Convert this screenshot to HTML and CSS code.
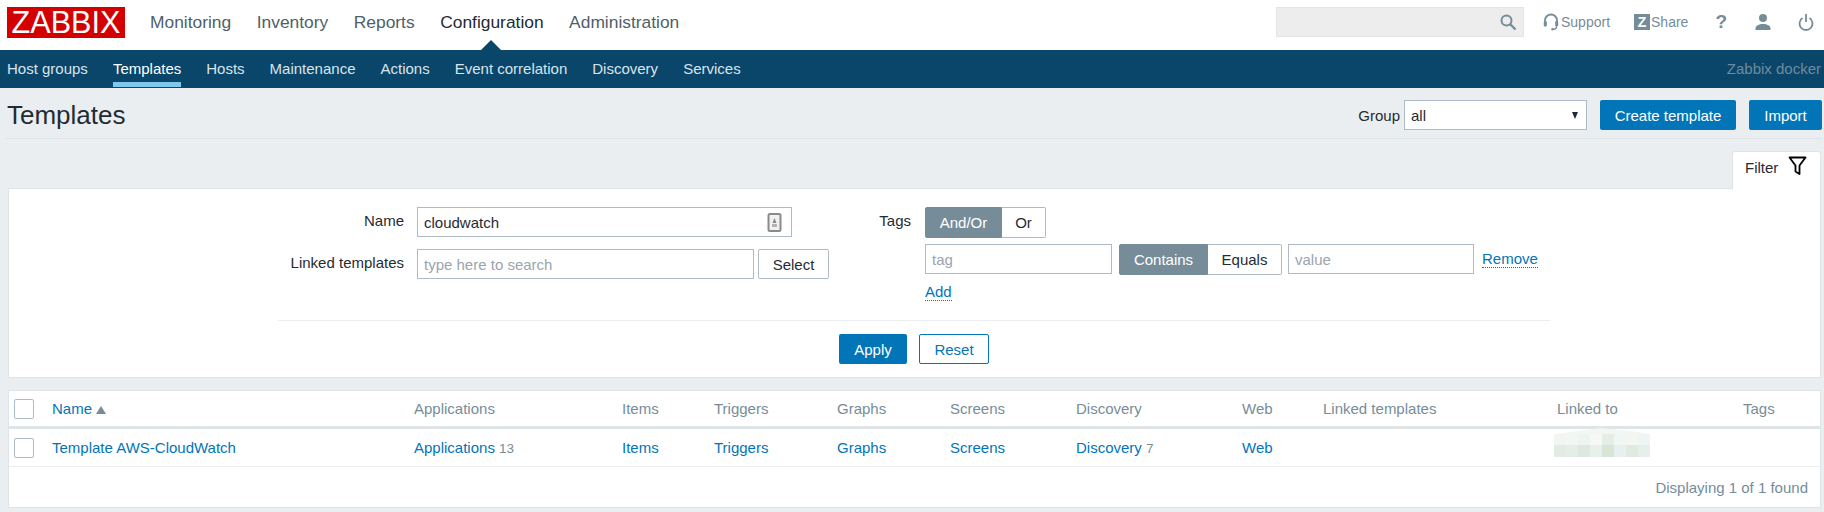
FILE: index.html
```html
<!DOCTYPE html>
<html lang="en">
<head>
    <meta charset="UTF-8">
    <title>Configuration of templates</title>
    <link rel="stylesheet" href="styles.css">
</head>
<body>
    <!-- Top menu -->
    <header class="top-nav">
        <div class="logo">ZABBIX</div>
        <nav class="main-menu">
            <a>Monitoring</a>
            <a>Inventory</a>
            <a>Reports</a>
            <a class="selected">Configuration</a>
            <a>Administration</a>
        </nav>
        <div class="top-tools">
            <div class="search">
                <svg width="18" height="18" viewBox="0 0 18 18"><circle cx="7.5" cy="7.5" r="5" fill="none" stroke="#768d99" stroke-width="2"/><path d="M11 11l5.5 5.5" stroke="#768d99" stroke-width="2.4"/></svg>
            </div>
            <a class="tool tool-support">
                <svg width="16" height="18" viewBox="0 0 16 18"><path d="M2 10V7.5a6 6 0 0 1 12 0V10" fill="none" stroke="#768d99" stroke-width="1.8"/><rect x="0.8" y="8" width="3" height="5.5" rx="1.2" fill="#768d99"/><rect x="12.2" y="8" width="3" height="5.5" rx="1.2" fill="#768d99"/><path d="M13.5 13.5c0 2-1.5 2.8-3.5 2.8" fill="none" stroke="#768d99" stroke-width="1.4"/><circle cx="9.5" cy="16.2" r="1.2" fill="#768d99"/></svg>
                Support
            </a>
            <a class="tool tool-share"><span class="z-box">Z</span>Share</a>
            <a class="tool tool-help">?</a>
            <a class="tool tool-user">
                <svg width="16" height="18" viewBox="0 0 16 18"><circle cx="8" cy="5" r="4" fill="#768d99"/><path d="M0.5 17v-1.500c0-3 3.500-4.500 7.500-4.500s7.500 1.500 7.500 4.500V17z" fill="#768d99"/></svg>
            </a>
            <a class="tool tool-power">
                <svg width="16" height="18" viewBox="0 0 16 18"><path d="M4.500 5a6.500 6.500 0 1 0 7 0" fill="none" stroke="#768d99" stroke-width="1.800"/><path d="M8 1v8" stroke="#768d99" stroke-width="1.800"/></svg>
            </a>
        </div>
    </header>

    <!-- Sub menu -->
    <nav class="sub-nav">
        <a>Host groups</a>
        <a class="selected">Templates</a>
        <a>Hosts</a>
        <a>Maintenance</a>
        <a>Actions</a>
        <a>Event correlation</a>
        <a>Discovery</a>
        <a>Services</a>
        <span class="server-name">Zabbix docker</span>
    </nav>

    <main class="page">
        <div class="title-row">
            <h1>Templates</h1>
            <div class="title-controls">
                <label class="group-label">Group</label>
                <div class="select-wrap">
                    <select class="select"><option>all</option></select>
                </div>
                <button class="btn btn-create">Create template</button>
                <button class="btn btn-import">Import</button>
            </div>
        </div>

        <div class="filter-tabs">
            <div class="filter-tab">
                Filter
                <svg width="19" height="20" viewBox="0 0 19 20"><path d="M1.500 1.500h16l-6 8v8.500l-4-2.500v-6z" fill="none" stroke="#000" stroke-width="1.800" stroke-linejoin="round"/></svg>
            </div>
        </div>

        <!-- Filter -->
        <section class="filter">
            <div class="filter-form">
                <div class="filter-col-left">
                    <label>Name</label>
                    <div class="input-row">
                        <input class="input input-name" value="cloudwatch">
                        <svg class="input-icon" width="15" height="19" viewBox="0 0 15 19"><rect x="1.500" y="1" width="12" height="17" rx="1.500" fill="#f1f1f1" stroke="#8a8a8a" stroke-width="2"/><path d="M7.500 5l2 5h-4z" fill="#8a8a8a"/><rect x="5" y="11" width="5" height="3" fill="#b5b5b5"/></svg>
                    </div>
                    <label>Linked templates</label>
                    <div class="input-row">
                        <input class="input input-linked" placeholder="type here to search">
                        <button class="btn-plain btn-select">Select</button>
                    </div>
                </div>
                <div class="filter-col-right">
                    <label>Tags</label>
                    <div class="segments segments-top">
                        <span class="seg seg-on seg-andor">And/Or</span>
                        <span class="seg seg-or">Or</span>
                    </div>
                    <span></span>
                    <div class="tag-row">
                        <input class="input input-tag" placeholder="tag">
                        <div class="segments">
                            <span class="seg seg-on seg-contains">Contains</span>
                            <span class="seg seg-equals">Equals</span>
                        </div>
                        <input class="input input-value" placeholder="value">
                        <a class="link-dotted link-remove">Remove</a>
                    </div>
                    <span></span>
                    <div class="add-row"><a class="link-dotted">Add</a></div>
                </div>
            </div>
            <div class="filter-buttons">
                <button class="btn btn-apply">Apply</button>
                <button class="btn-reset">Reset</button>
            </div>
        </section>

        <!-- Templates list -->
        <section class="list">
            <table>
                <colgroup>
                    <col class="c-check"><col class="c-name"><col class="c-apps"><col class="c-items">
                    <col class="c-triggers"><col class="c-graphs"><col class="c-screens"><col class="c-discovery">
                    <col class="c-web"><col class="c-linked"><col class="c-linkedto"><col>
                </colgroup>
                <thead>
                    <tr>
                        <th><span class="checkbox"></span></th>
                        <th><a>Name</a><span class="sort-up"></span></th>
                        <th>Applications</th>
                        <th>Items</th>
                        <th>Triggers</th>
                        <th>Graphs</th>
                        <th>Screens</th>
                        <th>Discovery</th>
                        <th>Web</th>
                        <th>Linked templates</th>
                        <th>Linked to</th>
                        <th>Tags</th>
                    </tr>
                </thead>
                <tbody>
                    <tr>
                        <td><span class="checkbox"></span></td>
                        <td><a>Template AWS-CloudWatch</a></td>
                        <td><a>Applications</a> <sup>13</sup></td>
                        <td><a>Items</a></td>
                        <td><a>Triggers</a></td>
                        <td><a>Graphs</a></td>
                        <td><a>Screens</a></td>
                        <td><a>Discovery</a> <sup>7</sup></td>
                        <td><a>Web</a></td>
                        <td></td>
                        <td class="cell-blur">
                            <!-- pixelated out in the original screenshot -->
                            <svg class="blur" width="96" height="30" viewBox="0 0 96 30">
                                <path d="M0 6Q24 3 48 0Q72 2 96 6V29H0z" fill="#f3f7f4"/>
                                <rect x="0" y="6" width="12" height="11" fill="#f1f6f2"/><rect x="12" y="6" width="12" height="11" fill="#f2f7f3"/><rect x="24" y="6" width="12" height="11" fill="#eef4ef"/><rect x="36" y="6" width="12" height="11" fill="#f5f8f5"/><rect x="48" y="6" width="12" height="11" fill="#e4eee6"/><rect x="60" y="6" width="12" height="11" fill="#f0f6f2"/><rect x="72" y="6" width="12" height="11" fill="#f3f6f1"/><rect x="84" y="6" width="12" height="11" fill="#eff5f3"/>
                                <rect x="0" y="17" width="12" height="12" fill="#e2ece4"/><rect x="12" y="17" width="12" height="12" fill="#e4ede6"/><rect x="24" y="17" width="12" height="12" fill="#dde9e0"/><rect x="36" y="17" width="12" height="12" fill="#e8f0ec"/><rect x="48" y="17" width="12" height="12" fill="#d8e6d8"/><rect x="60" y="17" width="12" height="12" fill="#e8f0ef"/><rect x="72" y="17" width="12" height="12" fill="#e0eae0"/><rect x="84" y="17" width="12" height="12" fill="#e6efe9"/>
                            </svg>
                        </td>
                        <td></td>
                    </tr>
                </tbody>
            </table>
            <div class="table-stats">Displaying 1 of 1 found</div>
        </section>
    </main>
</body>
</html>
```

FILE: styles.css
```css
* {
    box-sizing: border-box;
}

body {
    margin: 0;
    background: #ebeef0;
    color: #1f2c33;
    font-family: "Liberation Sans", Arial, sans-serif;
    font-size: 15px;
    overflow: hidden;
}

a {
    color: #0275b8;
}

/* Top menu */
.top-nav {
    display: flex;
    align-items: center;
    height: 50px;
    padding-left: 7px;
    background: #fff;
}

.logo {
    width: 118px;
    height: 31px;
    margin-top: -5px;
    background: #d40000;
    color: #fff;
    font-size: 30.6px;
    line-height: 31px;
    text-align: center;
}

.main-menu {
    display: flex;
    gap: 25.5px;
    margin-left: 25px;
    margin-top: -6px;
    font-size: 17.4px;
}

.main-menu a {
    color: #4f5f6a;
}

.main-menu a.selected {
    position: relative;
    color: #1f2c33;
}

/* little arrow that points at the sub menu */
.main-menu a.selected::after {
    content: "";
    position: absolute;
    left: 40.5px;
    top: 28px;
    border-left: 10.5px solid transparent;
    border-right: 10.5px solid transparent;
    border-bottom: 10px solid #0a466a;
}

.top-tools {
    display: flex;
    align-items: center;
    margin-left: auto;
    margin-top: -6px;
    height: 30px;
}

.search {
    display: flex;
    align-items: center;
    justify-content: flex-end;
    width: 248px;
    height: 30px;
    padding-right: 6px;
    background: #ededed;
    border: 1px solid #e5e5e5;
}

.tool {
    display: flex;
    align-items: center;
    color: #768d99;
    font-size: 14px;
}

.tool-support {
    gap: 2px;
    margin-left: 19px;
}

.tool-share {
    gap: 1px;
    margin-left: 24px;
}

.z-box {
    width: 16px;
    height: 16px;
    background: #768d99;
    color: #fff;
    font-weight: bold;
    font-size: 14px;
    line-height: 16px;
    text-align: center;
}

.tool-help {
    margin-left: 27px;
    font-size: 19px;
    font-weight: bold;
}

.tool-user {
    margin-left: 28px;
}

.tool-power {
    margin-left: 27px;
    margin-right: 10px;
}

/* Sub menu */
.sub-nav {
    display: flex;
    gap: 25px;
    height: 38px;
    padding: 0 3px 0 7px;
    background: #0a466a;
    line-height: 37px;
}

.sub-nav a {
    height: 37px;
    color: #d9e4ea;
}

.sub-nav a.selected {
    color: #fff;
    border-bottom: 5px solid #7ec8f0;
}

.server-name {
    margin-left: auto;
    color: #6f8c9e;
}

.page {
    padding: 0 3px 0 6px;
}

.title-row {
    display: flex;
    align-items: center;
    justify-content: space-between;
    height: 51px;
    margin-right: -1px;
    padding: 4px 0 0 1px;
    border-bottom: 1px solid #dfe4e7;
}

h1 {
    margin: 1px 0 0;
    font-size: 26px;
    font-weight: normal;
}

.title-controls {
    display: flex;
    align-items: center;
}

.group-label {
    margin-right: 4px;
}

.select-wrap {
    position: relative;
    margin-right: 13px;
}

.select-wrap::after {
    content: "";
    position: absolute;
    right: 9px;
    top: 12px;
    border-left: 3.5px solid transparent;
    border-right: 3.5px solid transparent;
    border-top: 7px solid #1f2c33;
}

.select {
    display: block;
    width: 183px;
    height: 30px;
    padding: 0 6px;
    appearance: none;
    background: #fff;
    border: 1px solid #acbbc7;
    border-radius: 0;
    color: #1f2c33;
    font: inherit;
}

.btn {
    height: 30px;
    padding: 0;
    background: #0275b8;
    border: 0;
    border-radius: 2px;
    color: #fff;
    font: inherit;
}

.btn-create {
    width: 136px;
    margin-right: 13px;
}

.btn-import {
    width: 73px;
}

.filter-tabs {
    display: flex;
    justify-content: flex-end;
    margin-top: 12px;
}

.filter-tab {
    position: relative;
    display: flex;
    gap: 10px;
    align-items: flex-start;
    width: 89px;
    height: 38px;
    margin-bottom: -1px;
    padding: 4px 0 0 12px;
    line-height: 23px;
    background: #fff;
    border: 1px solid #dfe4e7;
    border-bottom: 0;
    border-radius: 3px 3px 0 0;
}

.filter-tab svg {
    margin-top: 0;
}

/* Filter */
.filter {
    margin-left: 2px;
    height: 190px;
    padding: 18px 270px 0 269px;
    background: #fff;
    border: 1px solid #dfe4e7;
}

.filter-form {
    display: flex;
    height: 114px;
    border-bottom: 1px solid #ebeef0;
}

.filter-col-left {
    display: grid;
    grid-template-columns: 126px auto;
    grid-auto-rows: 30px;
    column-gap: 13px;
    row-gap: 12px;
    width: 560px;
}

.filter label {
    line-height: 28px;
    text-align: right;
}

.input-row {
    position: relative;
    display: flex;
    gap: 4px;
}

.input {
    height: 30px;
    padding: 0 6px;
    background: #fff;
    border: 1px solid #acbbc7;
    border-radius: 0;
    color: #1f2c33;
    font: inherit;
}

.input::placeholder {
    color: #9aa5ad;
    opacity: 1;
}

.input-name {
    width: 375px;
}

.input-linked {
    width: 337px;
}

.input-icon {
    position: absolute;
    left: 350px;
    top: 6px;
}

.btn-plain {
    height: 30px;
    padding: 0;
    background: #fff;
    border: 1px solid #acbbc7;
    border-radius: 2px;
    color: #1f2c33;
    font: inherit;
}

.btn-select {
    width: 71px;
}

.filter-col-right {
    display: grid;
    grid-template-columns: 73px auto;
    grid-template-rows: 31px 31px auto;
    column-gap: 14px;
    row-gap: 6px;
}

.segments {
    display: flex;
    height: 31px;
}

.segments-top {
    width: 121px;
}

.seg {
    height: 31px;
    line-height: 29px;
    text-align: center;
    border: 1px solid #acbbc7;
}

.seg-on {
    background: #768d99;
    border-color: #768d99;
    border-radius: 2px 0 0 2px;
    color: #fff;
}

.seg-andor {
    width: 77px;
}

.seg-or {
    width: 44px;
    border-left: 0;
    border-radius: 0 2px 2px 0;
}

.seg-contains {
    width: 89px;
}

.seg-equals {
    width: 74px;
    border-left: 0;
    border-radius: 0 2px 2px 0;
}

.tag-row {
    display: flex;
    gap: 7px;
    align-items: flex-start;
}

.input-tag {
    width: 187px;
}

.input-value {
    width: 186px;
    margin-left: -1px;
}

.link-dotted {
    line-height: 17px;
    border-bottom: 1px dotted #0275b8;
}

.link-remove {
    margin-left: 1px;
    margin-top: 6px;
}

.add-row {
    display: flex;
    align-items: flex-start;
    margin-top: 2px;
}

.filter-buttons {
    display: flex;
    justify-content: center;
    gap: 12px;
    padding-top: 13px;
}

.btn-apply {
    width: 68px;
}

.btn-reset {
    width: 70px;
    height: 30px;
    padding: 0;
    background: #fff;
    border: 1px solid #0275b8;
    border-radius: 2px;
    color: #0275b8;
    font: inherit;
}

/* Templates list */
.list {
    margin: 12px 0 0 2px;
    height: 118px;
    background: #fff;
    border: 1px solid #dfe4e7;
}

table {
    width: 100%;
    table-layout: fixed;
    border-collapse: separate;
    border-spacing: 0;
}

.c-check { width: 43px; }
.c-name { width: 362px; }
.c-apps { width: 208px; }
.c-items { width: 92px; }
.c-triggers { width: 123px; }
.c-graphs { width: 113px; }
.c-screens { width: 126px; }
.c-discovery { width: 166px; }
.c-web { width: 81px; }
.c-linked { width: 234px; }
.c-linkedto { width: 186px; }

th {
    height: 38px;
    padding: 0;
    color: #768d99;
    font-weight: normal;
    text-align: left;
    border-bottom: 3px solid #dfe4e7;
}

td {
    height: 38px;
    padding: 0;
    border-bottom: 1px solid #ebeef0;
}

.checkbox {
    display: block;
    width: 20px;
    height: 20px;
    margin-left: 5px;
    background: #fff;
    border: 1px solid #acbbc7;
    border-radius: 2px;
}

.sort-up {
    display: inline-block;
    margin-left: 4px;
    border-left: 5px solid transparent;
    border-right: 5px solid transparent;
    border-bottom: 8px solid #768d99;
}

sup {
    color: #768d99;
    font-size: 13.5px;
    vertical-align: baseline;
}

.cell-blur {
    position: relative;
}

.blur {
    position: absolute;
    left: -3px;
    top: -1px;
}

.table-stats {
    padding: 12px 12px 0 0;
    color: #768d99;
    text-align: right;
}
```
